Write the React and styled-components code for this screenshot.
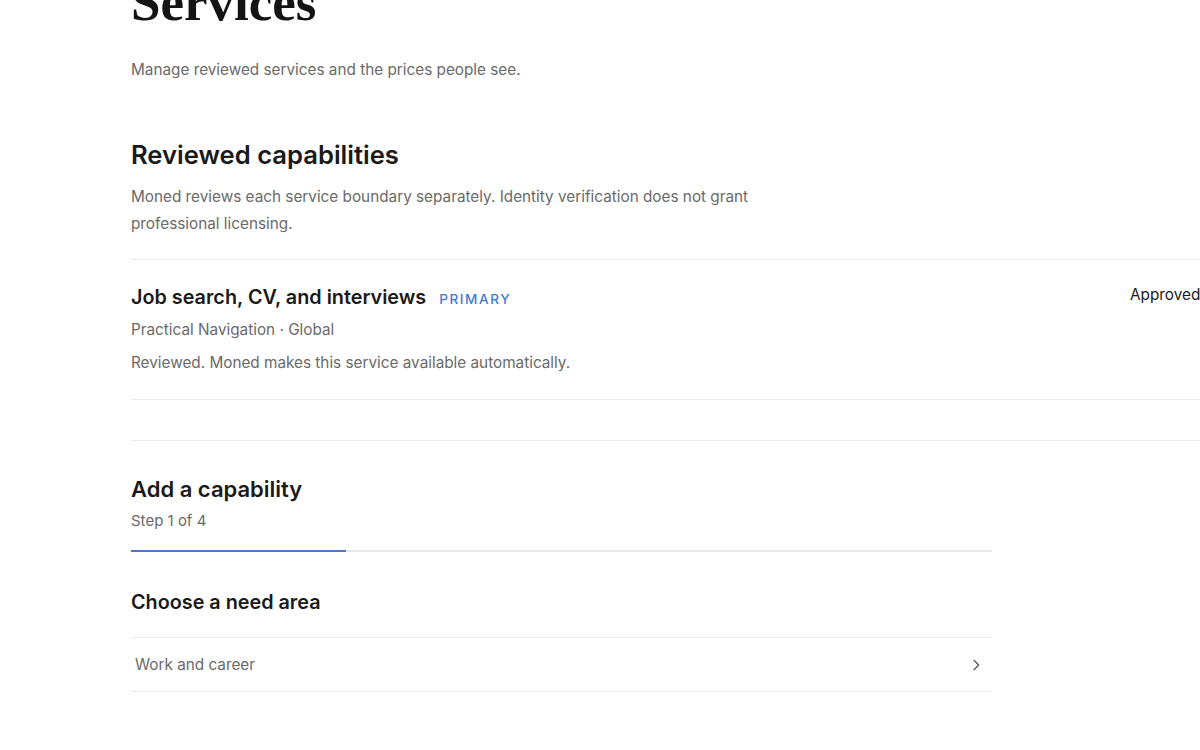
import React from "react";
import styled, { createGlobalStyle } from "styled-components";

const GlobalStyle = createGlobalStyle`
  html, body {
    margin: 0;
    padding: 0;
    background: #ffffff;
    overflow: hidden;
  }
  body {
    font-family: Inter, "Liberation Sans", sans-serif;
    color: #1c1c1c;
  }
`;

const Page = styled.main`
  width: 1200px;
  height: 750px;
  overflow: hidden;
  box-sizing: border-box;
  padding-left: 131px;
`;

const Content = styled.div`
  width: 1079px;
  margin-top: -36px;
`;

const Title = styled.h1`
  margin: 0;
  font-family: "Liberation Serif", "DejaVu Serif", serif;
  font-weight: 700;
  font-size: 53px;
  line-height: 76px;
  color: #141414;
`;

const Lead = styled.p`
  margin: 18px 0 0;
  font-size: 15.3px;
  line-height: 24px;
  color: #6a6a6a;
`;

const Section = styled.section`
  margin-top: 56px;
`;

const SectionTitle = styled.h2`
  margin: 0;
  font-size: 25.6px;
  font-weight: 600;
  line-height: 34px;
  color: #1a1a1a;
`;

const SectionText = styled.p`
  margin: 11px 0 0;
  max-width: 640px;
  font-size: 15.3px;
  line-height: 27px;
  color: #6a6a6a;
`;

const CapList = styled.ul`
  list-style: none;
  margin: 22px 0 0;
  padding: 0;
  border-top: 1px solid #ececec;
`;

const CapRow = styled.li`
  display: flex;
  justify-content: space-between;
  align-items: flex-start;
  padding: 24px 0 25px;
  border-bottom: 1px solid #ececec;
`;

const CapInfo = styled.div`
  display: flex;
  flex-direction: column;
`;

const CapName = styled.div`
  display: flex;
  align-items: baseline;
  gap: 13px;
  font-size: 19.8px;
  font-weight: 600;
  line-height: 26px;
  color: #1a1a1a;
`;

const Tag = styled.span`
  font-size: 13.5px;
  font-weight: 500;
  letter-spacing: 1.6px;
  color: #3f7ad1;
`;

const Meta = styled.div`
  margin-top: ${(p) => p.$gap}px;
  font-size: 15.3px;
  line-height: 22px;
  color: #6a6a6a;
`;

const Status = styled.div`
  width: 80px;
  flex-shrink: 0;
  white-space: nowrap;
  font-size: 15.3px;
  line-height: 22px;
  color: #1a1a1a;
`;

const Wizard = styled.section`
  margin-top: 40px;
  padding-top: 33px;
  border-top: 1px solid #ececec;
`;

const WizardInner = styled.div`
  width: 861px;
`;

const WizardTitle = styled.h3`
  margin: 0;
  font-size: 22px;
  font-weight: 600;
  line-height: 30px;
  color: #1a1a1a;
`;

const StepLabel = styled.div`
  margin-top: 6px;
  font-size: 15px;
  line-height: 22px;
  color: #6a6a6a;
`;

const Track = styled.div`
  margin-top: 18px;
  height: 2px;
  background: #e7e7e7;
`;

const Fill = styled.div`
  height: 100%;
  background: #4a7ad0;
`;

const StepTitle = styled.h4`
  margin: 37px 0 0;
  font-size: 19.8px;
  font-weight: 600;
  line-height: 26px;
  color: #1a1a1a;
`;

const Options = styled.ul`
  list-style: none;
  margin: 22px 0 0;
  padding: 0;
  border-top: 1px solid #ececec;
`;

const Option = styled.li`
  display: flex;
  align-items: center;
  justify-content: space-between;
  height: 53px;
  padding: 0 8px 0 4px;
  border-bottom: 1px solid #ececec;
  font-size: 15.3px;
  color: #6a6a6a;
`;

const Chevron = () => (
  <svg width="16" height="16" viewBox="0 0 24 24" fill="none" stroke="#555" strokeWidth="2" strokeLinecap="round" strokeLinejoin="round">
    <path d="M9 5l7 7-7 7" />
  </svg>
);

const capabilities = [
  {
    name: "Job search, CV, and interviews",
    tag: "PRIMARY",
    meta: "Practical Navigation · Global",
    note: "Reviewed. Moned makes this service available automatically.",
    status: "Approved",
  },
];

const steps = 4;
const current = 1;

export default function App() {
  return (
    <>
      <GlobalStyle />
      <Page>
        <Content>
          <Title>Services</Title>
          <Lead>Manage reviewed services and the prices people see.</Lead>

          <Section>
            <SectionTitle>Reviewed capabilities</SectionTitle>
            <SectionText>
              Moned reviews each service boundary separately. Identity verification does not grant professional licensing.
            </SectionText>
            <CapList>
              {capabilities.map((c) => (
                <CapRow key={c.name}>
                  <CapInfo>
                    <CapName>
                      {c.name}
                      <Tag>{c.tag}</Tag>
                    </CapName>
                    <Meta $gap={7}>{c.meta}</Meta>
                    <Meta $gap={11}>{c.note}</Meta>
                  </CapInfo>
                  <Status>{c.status}</Status>
                </CapRow>
              ))}
            </CapList>
          </Section>

          <Wizard>
            <WizardInner>
              <WizardTitle>Add a capability</WizardTitle>
              <StepLabel>Step {current} of {steps}</StepLabel>
              <Track>
                <Fill style={{ width: `${(current / steps) * 100}%` }} />
              </Track>
              <StepTitle>Choose a need area</StepTitle>
              <Options>
                <Option>
                  Work and career
                  <Chevron />
                </Option>
              </Options>
            </WizardInner>
          </Wizard>
        </Content>
      </Page>
    </>
  );
}
